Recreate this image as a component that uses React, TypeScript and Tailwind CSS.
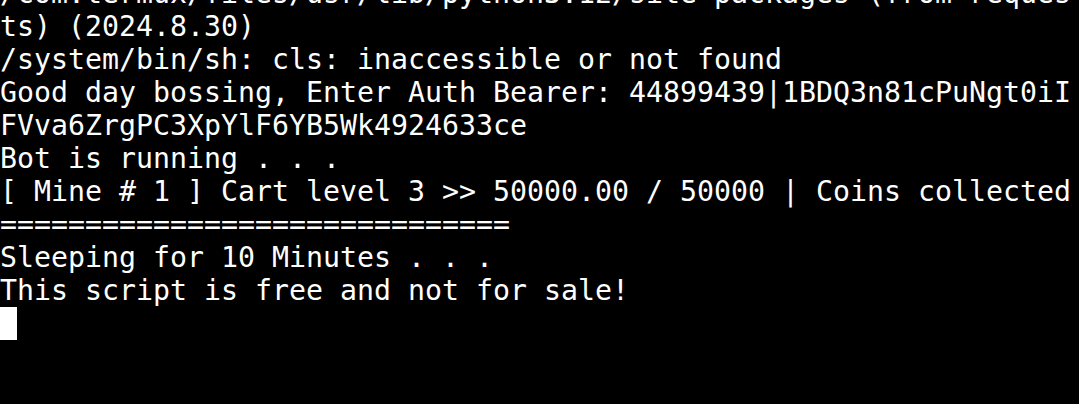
import React from "react";

const lines = [
  "/com.termux/files/usr/lib/python3.12/site-packages (from reques",
  "ts) (2024.8.30)",
  "/system/bin/sh: cls: inaccessible or not found",
  "Good day bossing, Enter Auth Bearer: 44899439|1BDQ3n81cPuNgt0iI",
  "FVva6ZrgPC3XpYlF6YB5Wk4924633ce",
  "Bot is running . . .",
  "[ Mine # 1 ] Cart level 3 >> 50000.00 / 50000 | Coins collected",
  "==============================",
  "Sleeping for 10 Minutes . . .",
  "This script is free and not for sale!",
];

export default function App() {
  return (
    <div className="w-[1079px] h-[404px] overflow-hidden bg-black text-white">
      <div
        className="mt-[-23px] text-[28.24px] leading-[33px] whitespace-pre"
        style={{ fontFamily: '"DejaVu Sans Mono", "Liberation Mono", monospace' }}
      >
        {lines.map((l, i) => (
          <div key={i} className="h-[33px]">
            {l}
          </div>
        ))}
        <div className="h-[33px]">
          <div className="w-[17px] h-[33px] bg-white" />
        </div>
      </div>
    </div>
  );
}
